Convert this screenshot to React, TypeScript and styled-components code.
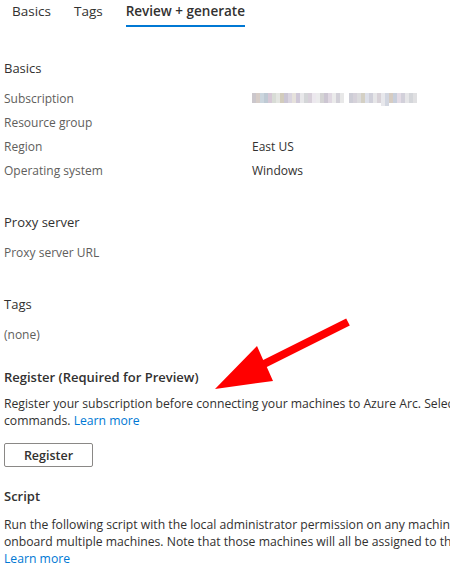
import React from 'react';
import styled, { createGlobalStyle } from 'styled-components';

const GlobalStyle = createGlobalStyle`
  body {
    margin: 0;
    background: #ffffff;
    font-family: "Open Sans", "Noto Sans", sans-serif;
    color: #323130;
    overflow: hidden;
  }
`;

const Page = styled.div`
  position: relative;
  width: 450px;
  height: 569px;
  overflow: hidden;
`;

const TabBar = styled.div`
  display: flex;
  gap: 23px;
  padding-left: 12px;
`;

const Tab = styled.div<{ $active?: boolean }>`
  font-size: 13.5px;
  line-height: 22px;
  padding-bottom: 3px;
  border-bottom: 2px solid ${(p) => (p.$active ? '#0078d4' : 'transparent')};
  color: #323130;
  font-weight: ${(p) => (p.$active ? 600 : 400)};
  white-space: nowrap;
`;

const Content = styled.div`
  padding: 0 4px;
  display: flex;
  flex-direction: column;
`;

const SectionTitle = styled.div<{ $top: number; $bold?: boolean }>`
  margin-top: ${(p) => p.$top}px;
  font-size: 13px;
  font-weight: ${(p) => (p.$bold ? 600 : 400)};
  line-height: 20px;
  color: #323130;
  white-space: nowrap;
`;

const Rows = styled.div`
  margin-top: 8px;
  display: flex;
  flex-direction: column;
`;

const Row = styled.div`
  display: grid;
  grid-template-columns: 248px 1fr;
  height: 24px;
  align-items: center;
  font-size: 12px;
  white-space: nowrap;
`;

const Label = styled.span`
  color: #605e5c;
`;

const Value = styled.span`
  color: #323130;
`;

const Blurred = styled.span`
  display: flex;
  align-items: flex-start;
  gap: 5px;
  height: 14px;
`;

const BlurWord = styled.span`
  display: flex;
  align-items: flex-start;
`;

const Pixel = styled.span<{ $c: string; $tall?: boolean }>`
  width: 4px;
  height: ${(p) => (p.$tall ? 13 : 10)}px;
  margin-top: 2px;
  background: ${(p) => p.$c};
`;

const Paragraph = styled.div<{ $top: number }>`
  margin-top: ${(p) => p.$top}px;
  font-size: 12.2px;
  line-height: 17px;
  color: #323130;
  white-space: nowrap;
`;

const Link = styled.a`
  color: #0078d4;
  text-decoration: none;
`;

const Button = styled.button`
  margin-top: 14px;
  width: 89px;
  height: 24px;
  padding: 0;
  background: #ffffff;
  border: 1px solid #8a8886;
  border-radius: 2px;
  font-family: inherit;
  font-size: 12.5px;
  font-weight: 600;
  color: #323130;
`;

const Annotation = styled.svg`
  position: absolute;
  left: 0;
  top: 0;
  pointer-events: none;
`;

const word1 = ['#cbc7cc', '#d6cdc8', '#cbd6de', '#bfcad4', '#d6c8d6', '#d8dcd6', '#e4e6e2', '#d2ccbc', '#cbc6d4', '#dad5e0', '#e6e2dc', '#cfc8d8', '#e8e8ea', '#d4d6d8', '#d8d0da', '#ece8ee', '#ececed', '#d4d4d4', '#ccc6d2', '#e0d8e2', '#ebebeb', '#d2d0d8', '#e8e8e8'];
const word2 = ['#cdcdd6', '#d6d2da', '#dcdcde', '#d4d0c4', '#dde0ea', '#d0d0da', '#e6e6e8', '#d8d2d8', '#e8e8ec', '#d2d6e0', '#d6ccc2', '#c8cfdc', '#e4dce6', '#d2d0da', '#e6e6e8', '#d4d6da', '#e0e0e2'];
const tall2 = [8, 9];

const App: React.FC = () => {
  return (
    <Page>
      <GlobalStyle />
      <TabBar>
        <Tab>Basics</Tab>
        <Tab>Tags</Tab>
        <Tab $active>Review + generate</Tab>
      </TabBar>

      <Content>
        <SectionTitle $top={31}>Basics</SectionTitle>
        <Rows>
          <Row>
            <Label>Subscription</Label>
            <Blurred>
              <BlurWord>
                {word1.map((c, i) => (
                  <Pixel key={i} $c={c} />
                ))}
              </BlurWord>
              <BlurWord>
                {word2.map((c, i) => (
                  <Pixel key={i} $c={c} $tall={tall2.includes(i)} />
                ))}
              </BlurWord>
            </Blurred>
          </Row>
          <Row>
            <Label>Resource group</Label>
            <Value></Value>
          </Row>
          <Row>
            <Label>Region</Label>
            <Value>East US</Value>
          </Row>
          <Row>
            <Label>Operating system</Label>
            <Value>Windows</Value>
          </Row>
        </Rows>

        <SectionTitle $top={30}>Proxy server</SectionTitle>
        <Rows>
          <Row>
            <Label>Proxy server URL</Label>
            <Value></Value>
          </Row>
        </Rows>

        <SectionTitle $top={30}>Tags</SectionTitle>
        <Rows>
          <Row>
            <Label>(none)</Label>
            <Value></Value>
          </Row>
        </Rows>

        <SectionTitle $top={21} $bold>
          Register (Required for Preview)
        </SectionTitle>
        <Paragraph $top={8}>
          Register your subscription before connecting your machines to Azure Arc. Select Register to register the resource providers, or run the
          <br />
          commands. <Link href="#">Learn more</Link>
        </Paragraph>
        <div>
          <Button>Register</Button>
        </div>

        <SectionTitle $top={19} $bold>
          Script
        </SectionTitle>
        <Paragraph $top={10}>
          Run the following script with the local administrator permission on any machine you want to connect. You can also use it to
          <br />
          onboard multiple machines. Note that those machines will all be assigned to the same resource group and region.
          <br />
          <Link href="#">Learn more</Link>
        </Paragraph>
      </Content>

      <Annotation width="450" height="569" viewBox="0 0 450 569">
        <polygon
          fill="#ff0000"
          points="346.2,318.4 349.8,325.6 266.8,367.1 273,381 215,389 257,346 263.2,359.9"
        />
      </Annotation>
    </Page>
  );
};

export default App;
